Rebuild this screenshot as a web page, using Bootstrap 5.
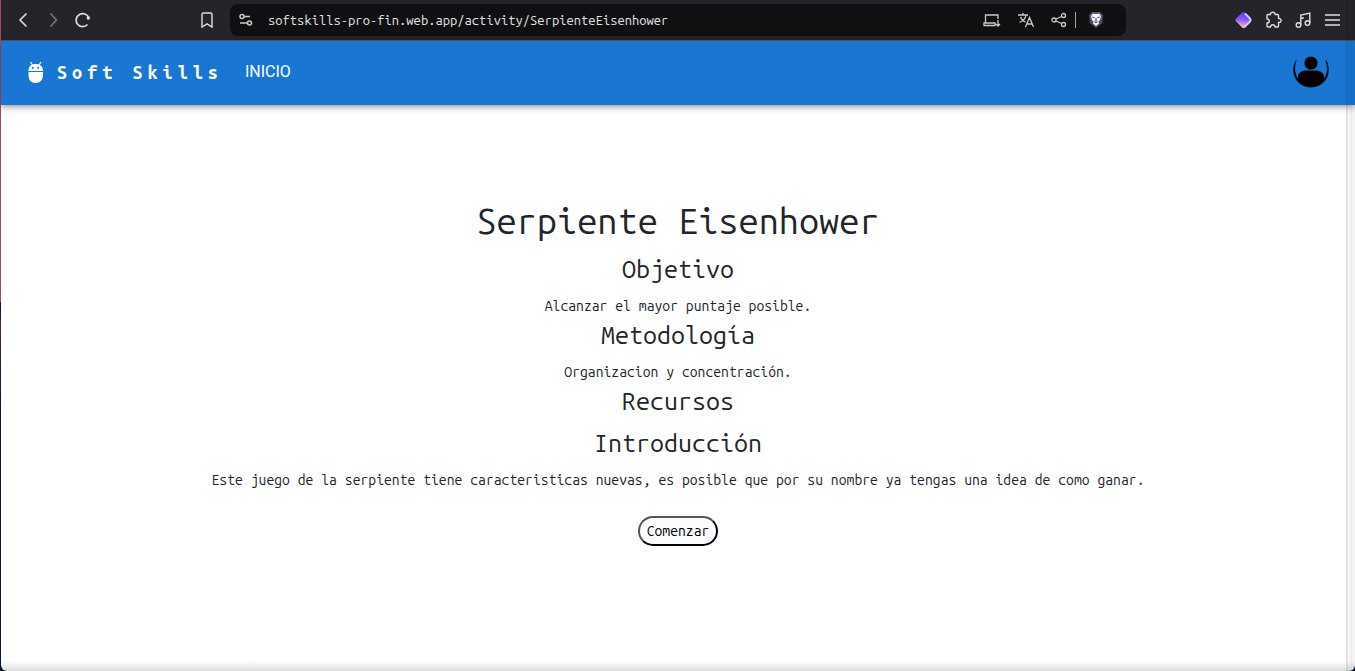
<!DOCTYPE html>
<html lang="es">
<head>
<meta charset="utf-8">
<meta name="viewport" content="width=device-width, initial-scale=1">
<title>Soft Skills</title>
<link href="https://cdn.jsdelivr.net/npm/bootstrap@5.3.0/dist/css/bootstrap.min.css" rel="stylesheet">
<style>
:root { --mono: "Ubuntu Mono", "Noto Sans Mono CJK SC", "DejaVu Sans Mono", monospace; }
body { font: 14px/24px var(--mono); background: linear-gradient(#9a5060 0 45%, #101c34 45% 47%, #4a2440 48% 50%, #26203c 54%, #07182a 62%); min-height: 100vh; padding-left: 1px; }
/* translucent window edge on the right */
body::after { content: ""; position: fixed; inset: 0 0 0 auto; width: 9px; pointer-events: none;
  background: linear-gradient(90deg, #0000001c 0 2px, #00000006 2px 3px, #0000000c 3px 5px, #00000014 5px 6px, #0000000c 6px); }
.toolbar { height: 41px; background: #25242a; border-bottom: 1px solid #55555a; color: #dedee2; padding: 0 14px; }
.toolbar button { border: 0; background: none; padding: 0; color: inherit; display: flex; }
.toolbar svg, .site-nav svg { display: block; flex: none; }
.tools-left { width: 215px; padding-right: 16px; }
.tools-right { gap: 12px; }
.address { background: #101012; border-radius: 8px; height: 32px; width: 896px; padding: 0 22px 0 8px; color: #c9c9cd; }
.address input { font: 13px/20px var(--mono); color: #e2e2e5; background: none; border: 0; padding: 0; outline: 0; min-width: 0; margin: 0 14px; }
.divider { width: 1px; height: 16px; background: #a5a5a8; }
.site-nav { background: #1976d2; height: 64px; padding: 0 25px 3px 25px; position: relative; box-shadow: 0 2px 4px -1px #0003, 0 4px 5px #0002, 0 1px 10px #0002; }
.site-nav a { color: #fff; text-decoration: none; }
.brand-name { font-size: 18px; font-weight: 700; letter-spacing: 5px; }
.menu-link { font: 16px/24px Roboto, Arial, sans-serif; margin-left: 22px; }
main { background: linear-gradient(#fff0 0 calc(100% - 10px), #ddd), #fff; border-radius: 0 0 6px 6px; padding-top: 93px; color: #212529; }
main h1 { font-size: 36px; line-height: 46px; font-weight: 400; }
main h2 { font-size: 25px; line-height: 34px; font-weight: 400; }
.start { font: 14px/24px var(--mono); color: #000; background: #fcfcff; border: 2px outset #000; border-radius: 15px; padding: 1px 7px; }
</style>
</head>
<body class="d-flex flex-column">
<header class="toolbar d-flex align-items-center justify-content-between">
  <div class="d-flex align-items-center flex-grow-1">
    <div class="tools-left d-flex align-items-center flex-shrink-0">
      <button aria-label="Atrás"><svg width="16" height="16" fill="none" stroke="currentColor" stroke-width="1.6"><path d="M11.500 1.500 5 8l6.500 6.500"/></svg></button>
      <button class="ms-3" aria-label="Adelante"><svg width="16" height="16" fill="none" stroke="#77777c" stroke-width="1.6"><path d="m3.500 1.500 6 6.500-6 6.500"/></svg></button>
      <button class="ms-2 ps-1" aria-label="Recargar"><svg width="18" height="16" fill="none" stroke="currentColor" stroke-width="1.700"><path d="M13.800 6A6.500 6.500 0 1 0 12.500 12.500"/><circle cx="13.300" cy="6" r="1.700" fill="currentColor" stroke="none"/></svg></button>
      <button class="ms-auto" aria-label="Marcador"><svg width="14" height="16" fill="none" stroke="currentColor" stroke-width="1.400"><path d="M3.500 1h7a1.500 1.500 0 0 1 1.500 1.500V15L7 11.800 2 15V2.500A1.500 1.500 0 0 1 3.500 1Z"/></svg></button>
    </div>
    <div class="address d-flex align-items-center">
      <button aria-label="Información del sitio"><svg width="16" height="14" fill="none" stroke="currentColor" stroke-width="1.500"><circle cx="4" cy="3.500" r="2"/><path d="M6 3.500h6M2 10h7"/><circle cx="11.500" cy="10" r="2"/></svg></button>
      <input class="flex-grow-1" aria-label="Dirección" value="softskills-pro-fin.web.app/activity/SerpienteEisenhower">
      <div class="d-flex align-items-center">
        <button class="me-3" aria-label="Instalar"><svg width="18" height="16" fill="none" stroke="currentColor" stroke-width="1.300"><path d="M2.500 10.500V3H15v4M1 13.500v-2.500h11v2.500ZM15 8v6M13 12l2 2 2-2"/></svg></button>
        <button class="me-3" aria-label="Traducir"><svg width="18" height="16" fill="none" stroke="currentColor" stroke-width="1.300"><path d="M1 3h10M6 1v2M2.500 10.500C6 9 8.500 6.500 9 3M3.500 5c.7 2 2.500 4 5 5M8.500 15 12.500 5.500 16.500 15M9.700 12h5.600"/></svg></button>
        <button class="me-2" aria-label="Compartir"><svg width="16" height="16" fill="none" stroke="currentColor" stroke-width="1.300"><circle cx="3" cy="8" r="2"/><circle cx="12.500" cy="3.500" r="2"/><circle cx="12.500" cy="12.500" r="2"/><path d="m5 7 5.500-2.500M5 9l5.500 2.500"/></svg></button>
        <span class="divider me-2"></span>
        <button class="ms-1" aria-label="Brave Shields"><svg width="16" height="18"><path d="M4 1h8l3 3-1 8-6 5-6-5L1 4Z" fill="#50506a"/><path d="m5 2.500 3 .5 3-.5L13 5l-1 4-1.500 1.500.5 2L8 15l-3-2.500.5-2L4 9 3 5Z" fill="#f4f4f8"/><path d="m4.500 6 2 .7M11.500 6l-2 .7M8 7v3M6.500 10.500 8 11.500l1.500-1" stroke="#50506a" stroke-width="1.200" fill="none"/></svg></button>
      </div>
    </div>
  </div>
  <div class="tools-right d-flex align-items-center">
    <button aria-label="Extensión"><svg width="18" height="18"><defs><linearGradient id="gem" gradientUnits="userSpaceOnUse" x1="9" y1="2" x2="7" y2="16"><stop stop-color="#5b3df5"/><stop offset=".5" stop-color="#8a5cf8"/><stop offset="1" stop-color="#ffc3a8"/></linearGradient></defs><path d="M7.100 1.600q1.400-1.200 2.800 0l6 6q1.200 1.400 0 2.800l-6 6q-1.400 1.200-2.800 0l-6-6q-1.200-1.400 0-2.800Z" fill="url(#gem)"/><path d="m10 2.500 5 5q1.200 1.500 0 3l-5.500 5.500" stroke="#d9c2ff" stroke-width="2" fill="none"/></svg></button>
    <button aria-label="Extensiones"><svg width="18" height="18" fill="none" stroke="currentColor" stroke-width="1.400" stroke-linejoin="round"><path d="M3 3.500h2.500C5 .500 10.500 .500 10 3.500h2.500q1 0 1 1V7.500c3.500-.3 3.500 4.300 0 4V15q0 1-1 1H10c0-3-4.500-3-4.500 0H3q-1 0-1-1v-3c3 0 3-4.300 0-4V4.500q0-1 1-1Z"/></svg></button>
    <button aria-label="Música"><svg width="18" height="18" fill="none" stroke="currentColor" stroke-width="1.400"><circle cx="3.500" cy="14" r="2.300"/><circle cx="12.500" cy="12" r="2.300"/><path d="M5.800 14V4l9-2v10M5.800 7.500l3-.7" /></svg></button>
    <button aria-label="Menú"><svg width="16" height="14" stroke="currentColor" stroke-width="1.500"><path d="M0 2h15M0 7h15M0 12h15"/></svg></button>
  </div>
</header>
<nav class="site-nav d-flex align-items-center">
  <a href="#" class="d-flex align-items-center">
    <svg class="me-2" width="19" height="24" viewBox="0 0 19 24" fill="#fff"><path d="m4.500 2 2 3M15 2l-2 3" stroke="#fff" stroke-width="1.200"/><path fill-rule="evenodd" d="M2.500 11C2.500 6 5 4 9.500 4S17 6 17 11ZM6 7v1.700h1.700V7Zm5.300 0v1.700H13V7Z"/><path d="M2.500 12H17v3c0 5-3 8-7.500 8S2.500 20 2.500 15Z"/></svg>
    <span class="brand-name ps-1">Soft Skills</span>
  </a>
  <a href="#" class="menu-link">INICIO</a>
  <a href="#" class="ms-auto" aria-label="Perfil"><svg width="38" height="34" viewBox="0 0 38 34"><path d="M4 5.500C-2 17 4 32 19 32S40 17 34 5.500C38 17 33 31 19 31S0 17 4 5.500Z" stroke="#000" stroke-width=".7"/><circle cx="19" cy="8" r="6.600"/><path d="M5.500 25c0-6 3-9.500 8-9.500h11c5 0 8 3.500 8 9.500-3 4.500-8 6.500-13.500 6.500S8.500 29.500 5.500 25Z"/></svg></a>
</nav>
<main class="flex-grow-1 text-center">
  <h1>Serpiente Eisenhower</h1>
  <h2>Objetivo</h2>
  <p class="mb-0">Alcanzar el mayor puntaje posible.</p>
  <h2>Metodología</h2>
  <p class="mb-0">Organizacion y concentración.</p>
  <h2>Recursos</h2>
  <h2>Introducción</h2>
  <p class="mb-4">Este juego de la serpiente tiene caracteristicas nuevas, es posible que por su nombre ya tengas una idea de como ganar.</p>
  <button class="start">Comenzar</button>
</main>
<script src="https://cdn.jsdelivr.net/npm/bootstrap@5.3.0/dist/js/bootstrap.bundle.min.js"></script>
</body>
</html>
